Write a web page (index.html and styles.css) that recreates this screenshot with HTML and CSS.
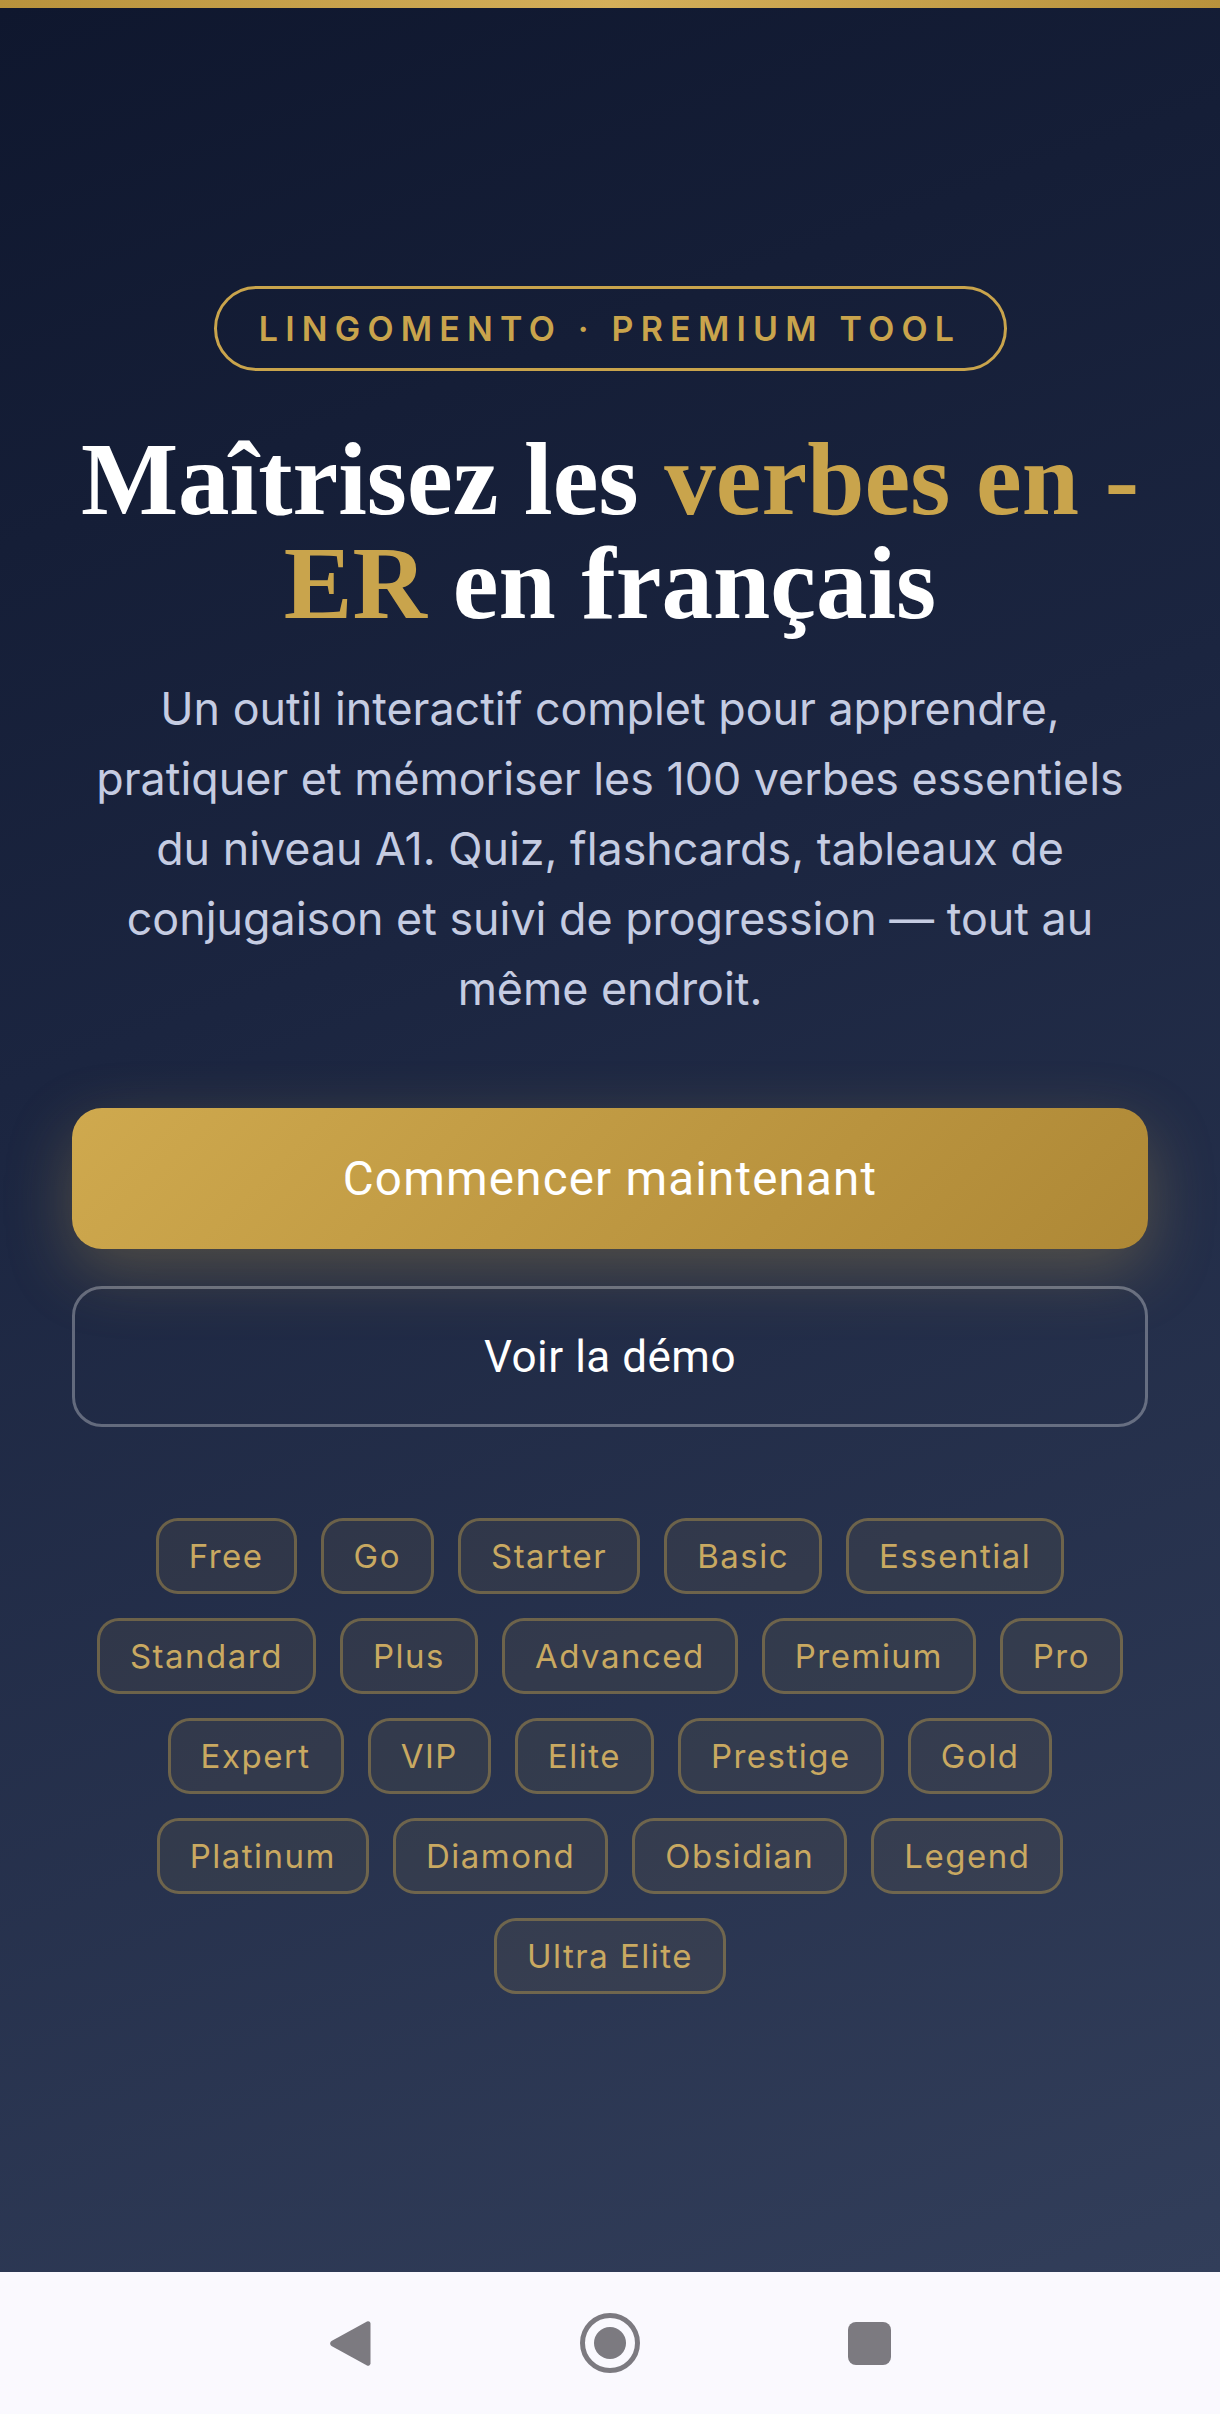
FILE: index.html
```html
<!DOCTYPE html>
<html lang="fr">
<head>
<meta charset="utf-8">
<title>Lingomento</title>
<link rel="stylesheet" href="styles.css">
</head>
<body>
<div class="topbar"></div>
<main class="hero">
  <div class="badge">LINGOMENTO · PREMIUM TOOL</div>
  <h1 class="title">Maîtrisez les <span class="gold">verbes en -ER</span> en français</h1>
  <p class="lead">Un outil interactif complet pour apprendre, pratiquer et mémoriser les 100 verbes essentiels du niveau A1. Quiz, flashcards, tableaux de conjugaison et suivi de progression — tout au même endroit.</p>
  <div class="actions">
    <a class="btn btn-primary">Commencer maintenant</a>
    <a class="btn btn-ghost">Voir la démo</a>
  </div>
  <div class="tags">
    <span class="tag">Free</span><span class="tag">Go</span><span class="tag">Starter</span><span class="tag">Basic</span><span class="tag">Essential</span>
    <span class="tag">Standard</span><span class="tag">Plus</span><span class="tag">Advanced</span><span class="tag">Premium</span><span class="tag">Pro</span>
    <span class="tag">Expert</span><span class="tag">VIP</span><span class="tag">Elite</span><span class="tag">Prestige</span><span class="tag">Gold</span>
    <span class="tag">Platinum</span><span class="tag">Diamond</span><span class="tag">Obsidian</span><span class="tag">Legend</span>
    <span class="tag">Ultra Elite</span>
  </div>
</main>
<nav class="navbar">
  <svg class="nav-back" viewBox="0 0 41 49" width="41" height="49"><path d="M37 2.5a2.5 2.5 0 0 1 3.5 2V44.500a2.500 2.500 0 0 1-3.500 2L1.500 27a3 3 0 0 1 0-5Z" fill="#7c7a80"/></svg>
  <svg class="nav-home" viewBox="0 0 60 60" width="60" height="60"><circle cx="30" cy="30" r="27.500" fill="none" stroke="#7c7a80" stroke-width="5"/><circle cx="30" cy="30" r="16" fill="#7c7a80"/></svg>
  <div class="nav-recent"></div>
</nav>
</body>
</html>
```

FILE: styles.css
```css
* { box-sizing: border-box; }
html, body { margin: 0; padding: 0; }
body {
  width: 1220px;
  height: 2414px;
  display: flex;
  flex-direction: column;
  overflow: hidden;
  font-family: "Inter", "Liberation Sans", sans-serif;
  background: #faf9fe;
}
.topbar {
  height: 8px;
  flex: none;
  background: linear-gradient(90deg, #b8923c, #d4af5a 50%, #b8923c);
}
.hero {
  height: 2264px;
  flex: none;
  display: flex;
  flex-direction: column;
  align-items: center;
  padding: 278px 72px 0;
  background: linear-gradient(160deg, #0f172e 0%, #1b2540 40%, #323e5a 100%);
}
.badge {
  width: 793px;
  height: 85px;
  display: flex;
  align-items: center;
  justify-content: center;
  border: 3px solid #c9a44c;
  border-radius: 43px;
  color: #c9a44c;
  font-size: 34px;
  font-weight: 600;
  letter-spacing: 7.2px;
  white-space: nowrap;
}
.title {
  width: 1100px;
  margin: 56px 0 0;
  font-family: "Liberation Serif", serif;
  font-weight: 700;
  font-size: 103px;
  line-height: 104px;
  text-align: center;
  color: #ffffff;
}
.gold { color: #c9a44c; }
.lead {
  width: 1050px;
  margin: 39px 0 0;
  font-size: 44.800px;
  line-height: 70px;
  text-align: center;
  color: #c5cce2;
}
.actions {
  width: 1076px;
  margin-top: 84px;
  display: flex;
  flex-direction: column;
  gap: 37px;
}
.btn {
  height: 141px;
  display: flex;
  align-items: center;
  justify-content: center;
  border-radius: 30px;
  color: #ffffff;
  font-family: "Roboto", "Liberation Sans", sans-serif;
  font-weight: 450;
}
.btn-primary {
  font-size: 47.500px;
  letter-spacing: 1.200px;
  background: linear-gradient(135deg, #cfa94e, #ae8836);
  box-shadow: 0 22px 66px rgba(201, 164, 76, 0.3);
}
.btn-ghost {
  font-size: 44px;
  letter-spacing: 0.5px;
  border: 3px solid rgba(255, 255, 255, 0.3);
}
.tags {
  width: 1076px;
  margin-top: 91px;
  display: flex;
  flex-wrap: wrap;
  justify-content: center;
  gap: 24px;
}
.tag {
  height: 76px;
  padding: 0 30px;
  display: flex;
  align-items: center;
  border: 3px solid rgba(201, 164, 76, 0.4);
  border-radius: 22px;
  background: rgba(201, 164, 76, 0.08);
  color: #c9a961;
  font-size: 33px;
  letter-spacing: 1.5px;
  white-space: nowrap;
}
.navbar {
  flex: 1;
  display: flex;
  align-items: center;
  background: #faf9fe;
}
.nav-back { margin-left: 330px; }
.nav-home { margin-left: 209px; }
.nav-recent {
  width: 43px;
  height: 43px;
  margin-left: 208px;
  border-radius: 8px;
  background: #7c7a80;
}
```
